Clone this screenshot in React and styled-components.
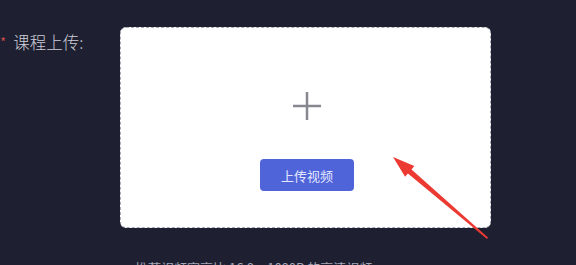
import styled, { createGlobalStyle } from 'styled-components';

const GlobalStyle = createGlobalStyle`
  html, body {
    margin: 0;
    padding: 0;
    background: #1e2031;
    font-family: "Noto Sans CJK SC", "Noto Sans", sans-serif;
  }
`;

const Page = styled.div`
  position: relative;
  width: 576px;
  height: 265px;
  overflow: hidden;
  background: #1e2031;
`;

const FormRow = styled.div`
  display: flex;
  align-items: flex-start;
  padding-top: 27px;
`;

const Label = styled.div`
  width: 120px;
  display: flex;
  align-items: center;
  padding-top: 5px;
  font-size: 16.5px;
  line-height: 20px;
  font-weight: 300;
  color: #cdced7;
`;

const Star = styled.span`
  color: #e0524a;
  font-size: 14px;
  margin-right: 7px;
`;

const UploadBox = styled.div`
  width: 369px;
  background: #ffffff;
  border: 1px dashed #a9acb8;
  border-radius: 6px;
  display: flex;
  flex-direction: column;
  align-items: center;
  padding-top: 62px;
  box-sizing: content-box;
  height: 137px;
`;

const PlusIcon = styled.svg`
  width: 32px;
  height: 32px;
  margin-left: 3px;
`;

const UploadButton = styled.button`
  margin-top: 37px;
  margin-left: 3px;
  width: 94px;
  height: 32px;
  border: none;
  border-radius: 4px;
  background: #5064d9;
  color: #e3e7ff;
  font-family: inherit;
  font-size: 13px;
`;

const Hint = styled.div`
  margin: 30px 0 0 135px;
  font-size: 13px;
  line-height: 19px;
  color: #a3a5b5;
  white-space: nowrap;
`;

const Annotation = styled.svg`
  position: absolute;
  left: 0;
  top: 0;
  pointer-events: none;
`;

export default function App() {
  return (
    <Page>
      <GlobalStyle />
      <FormRow>
        <Label>
          <Star>*</Star>课程上传:
        </Label>
        <UploadBox>
          <PlusIcon viewBox="0 0 32 32">
            <path d="M16 2v28M2 16h28" stroke="#86878f" strokeWidth="2.5" fill="none" />
          </PlusIcon>
          <UploadButton>上传视频</UploadButton>
        </UploadBox>
      </FormRow>
      <Hint>推荐视频宽高比 16:9，1080P 的高清视频</Hint>
      <Annotation width="576" height="265" viewBox="0 0 576 265">
        <polygon
          points="393,157 414.3,166.1 411.5,169.5 488,237.5 487,239 407.9,173.6 405.1,176.7"
          fill="#ec3a33"
        />
      </Annotation>
    </Page>
  );
}
